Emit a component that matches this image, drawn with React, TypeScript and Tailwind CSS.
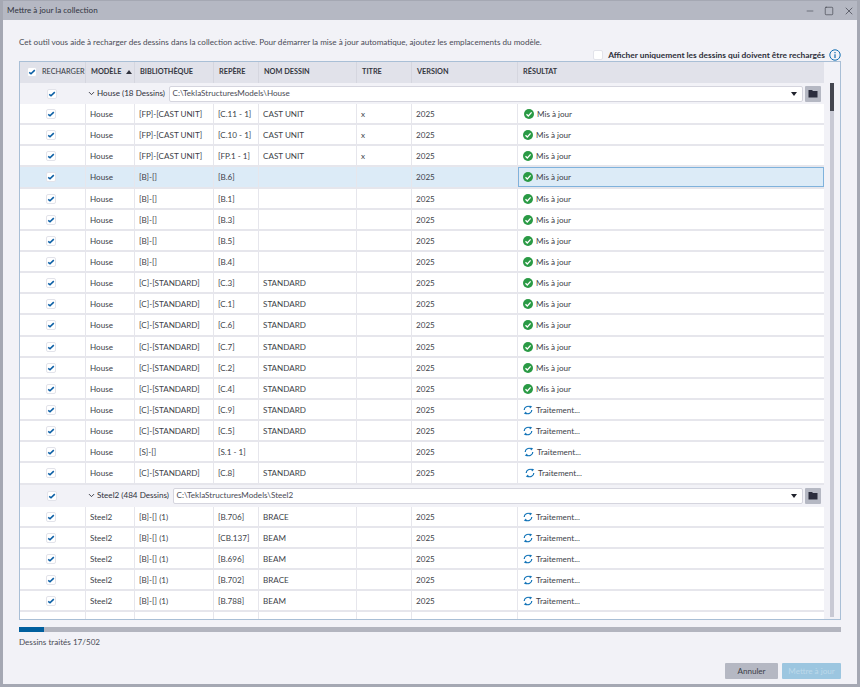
import { Minus, Square, X, ChevronDown } from 'lucide-react';

type Row = { model: string; lib: string; mark: string; name?: string; title?: string; done?: boolean; shift?: string; selected?: boolean };

const HOUSE: Row[] = [
  { model: 'House', lib: '[FP]-[CAST UNIT]', mark: '[C.11 - 1]', name: 'CAST UNIT', title: 'x', done: true, shift: 'ml-[1px]' },
  { model: 'House', lib: '[FP]-[CAST UNIT]', mark: '[C.10 - 1]', name: 'CAST UNIT', title: 'x', done: true },
  { model: 'House', lib: '[FP]-[CAST UNIT]', mark: '[FP.1 - 1]', name: 'CAST UNIT', title: 'x', done: true },
  { model: 'House', lib: '[B]-[]', mark: '[B.6]', done: true, selected: true },
  { model: 'House', lib: '[B]-[]', mark: '[B.1]', done: true },
  { model: 'House', lib: '[B]-[]', mark: '[B.3]', done: true },
  { model: 'House', lib: '[B]-[]', mark: '[B.5]', done: true },
  { model: 'House', lib: '[B]-[]', mark: '[B.4]', done: true },
  { model: 'House', lib: '[C]-[STANDARD]', mark: '[C.3]', name: 'STANDARD', done: true },
  { model: 'House', lib: '[C]-[STANDARD]', mark: '[C.1]', name: 'STANDARD', done: true },
  { model: 'House', lib: '[C]-[STANDARD]', mark: '[C.6]', name: 'STANDARD', done: true },
  { model: 'House', lib: '[C]-[STANDARD]', mark: '[C.7]', name: 'STANDARD', done: true },
  { model: 'House', lib: '[C]-[STANDARD]', mark: '[C.2]', name: 'STANDARD', done: true },
  { model: 'House', lib: '[C]-[STANDARD]', mark: '[C.4]', name: 'STANDARD', done: true },
  { model: 'House', lib: '[C]-[STANDARD]', mark: '[C.9]', name: 'STANDARD' },
  { model: 'House', lib: '[C]-[STANDARD]', mark: '[C.5]', name: 'STANDARD' },
  { model: 'House', lib: '[S]-[]', mark: '[S.1 - 1]', shift: 'ml-[1px]' },
  { model: 'House', lib: '[C]-[STANDARD]', mark: '[C.8]', name: 'STANDARD', shift: 'ml-[2px]' },
];

const STEEL: Row[] = [
  { model: 'Steel2', lib: '[B]-[] (1)', mark: '[B.706]', name: 'BRACE' },
  { model: 'Steel2', lib: '[B]-[] (1)', mark: '[CB.137]', name: 'BEAM' },
  { model: 'Steel2', lib: '[B]-[] (1)', mark: '[B.696]', name: 'BEAM' },
  { model: 'Steel2', lib: '[B]-[] (1)', mark: '[B.702]', name: 'BRACE' },
  { model: 'Steel2', lib: '[B]-[] (1)', mark: '[B.788]', name: 'BEAM' },
];

function Checkbox() {
  return (
    <span className="flex h-[10px] w-[10px] items-center justify-center rounded-[2px] border border-[#e2e3ea] bg-white">
      <svg width="8" height="8" viewBox="0 0 8 8">
        <path d="M1.2 4.4 L3 5.8 L6.8 2.2" fill="none" stroke="#0b5fa5" strokeWidth="1.6" />
      </svg>
    </span>
  );
}

function DoneIcon() {
  return (
    <svg width="10" height="10" viewBox="0 0 10 10" className="shrink-0">
      <circle cx="5" cy="5" r="5" fill="#2a9a45" />
      <path d="M2.5 5.2 L4.3 7 L7.6 3.4" fill="none" stroke="white" strokeWidth="1.3" />
    </svg>
  );
}

function BusyIcon() {
  return (
    <svg width="10" height="10" viewBox="0 0 10 10" className="shrink-0">
      <path d="M1.2 5 A3.8 3.8 0 0 1 7.2 2" fill="none" stroke="#1374b8" strokeWidth="1.2" />
      <path d="M8.8 5 A3.8 3.8 0 0 1 2.8 8" fill="none" stroke="#1374b8" strokeWidth="1.2" />
      <path d="M6.6 0.6 L9.2 1.6 L7 3.6 Z" fill="#1374b8" />
      <path d="M3.4 9.4 L0.8 8.4 L3 6.4 Z" fill="#1374b8" />
    </svg>
  );
}

function DataRow({ row }: { row: Row }) {
  const bg = row.selected ? 'bg-[#dcebf7]' : 'bg-white';
  const cell = 'flex h-full items-center border-r border-[#e6e6ec] pl-[4px] pt-[1px] truncate';
  return (
    <div className={`flex h-[21.15px] shrink-0 border-b-2 border-[#e6e6ec] text-[#3d3f49] ${bg}`}>
      <div className="flex h-full w-[66px] items-center justify-center border-r border-[#e6e6ec] pr-[3px] pt-[1px]">
        <Checkbox />
      </div>
      <div className={`${cell} w-[49px]`}>{row.model}</div>
      <div className={`${cell} w-[79px]`}>{row.lib}</div>
      <div className={`${cell} w-[45px]`}>{row.mark}</div>
      <div className={`${cell} w-[98px]`}>{row.name}</div>
      <div className={`${cell} w-[55px]`}>{row.title}</div>
      <div className={`${cell} w-[106px]`}>2025</div>
      <div className={`flex h-full w-[306px] items-center gap-[3px] pt-[1px] ${row.selected ? 'border border-[#7fb2dc] pl-[4px]' : 'pl-[5px]'}`}>
        <span className={`flex items-center gap-[3px] ${row.shift ?? ''}`}>
          {row.done ? <DoneIcon /> : <BusyIcon />}
          {row.done ? 'Mis à jour' : 'Traitement...'}
        </span>
      </div>
    </div>
  );
}

function GroupRow({ label, path, height }: { label: string; path: string; height: string }) {
  return (
    <div className={`flex shrink-0 items-center bg-[#f2f2f7] ${height}`}>
      <div className="flex w-[66px] shrink-0 justify-center pr-[3px]">
        <Checkbox />
      </div>
      <ChevronDown size={9} strokeWidth={2.4} className="ml-[1px] shrink-0 text-[#30323c]" />
      <span className="ml-[1px] shrink-0 text-[#2f313b]">{label}</span>
      <div className="ml-[4.5px] flex h-[16px] flex-1 items-center justify-between rounded-[2px] border border-[#d5d5de] bg-white px-[2px] text-[#4a4c56]">
        <span>{path}</span>
        <span className="mr-[3px] h-0 w-0 border-x-[3.5px] border-t-[4px] border-x-transparent border-t-[#20222c]" />
      </div>
      <div className="ml-[2px] mr-[3px] flex h-[16px] w-[16px] shrink-0 items-center justify-center rounded-[1px] bg-[#b5b8c3]">
        <svg width="10" height="9" viewBox="0 0 10 9">
          <path d="M0.5 1 H4 L5 2 H9.5 V8.5 H0.5 Z" fill="#2a2c3c" />
        </svg>
      </div>
    </div>
  );
}

function HeaderCell({ label, width, children }: { label: string; width: string; children?: React.ReactNode }) {
  return (
    <div className={`flex h-full items-center gap-[4px] border-r border-[#d5d6df] pb-[1px] pl-[5px] font-bold ${width}`}>
      {label}
      {children}
    </div>
  );
}

export default function App() {
  return (
    <div className="flex h-[687px] w-[860px] flex-col overflow-hidden border-x-[3px] border-b-[3px] border-t border-[#a5a8b3] bg-[#f2f2f7] text-[8.1px] font-['Lato',sans-serif]">
      <div className="flex h-[19px] shrink-0 items-center justify-between bg-[#b5b8c3] pl-[4px] pr-[2px] text-[#33353f]">
        <span>Mettre à jour la collection</span>
        <div className="flex items-center gap-[9px] text-[#33353f]">
          <Minus size={10} strokeWidth={1.3} />
          <Square size={10} strokeWidth={1.4} />
          <X size={12} strokeWidth={1.3} />
        </div>
      </div>

      <div className="flex flex-1 flex-col px-[16px]">
        <p className="mt-[16px] h-[12px] leading-[12px] text-[#4a4c56]">
          Cet outil vous aide à recharger des dessins dans la collection active. Pour démarrer la mise à jour automatique, ajoutez les emplacements du modèle.
        </p>
        <div className="mt-[1px] flex h-[12px] items-center justify-end">
          <span className="h-[10px] w-[10px] rounded-[2px] border border-[#e2e3ea] bg-white" />
          <span className="ml-[5px] text-[8.4px] font-bold text-[#2d2f39]">Afficher uniquement les dessins qui doivent être rechargés</span>
          <svg width="12" height="12" viewBox="0 0 12 12" className="ml-[4px]">
            <circle cx="6" cy="6" r="5.2" fill="none" stroke="#0f6cb0" strokeWidth="1" />
            <path d="M6 5.2 V9 M6 3 V4.2" stroke="#0f6cb0" strokeWidth="1.2" />
          </svg>
        </div>

        <div className="flex h-[559px] shrink-0 overflow-hidden border border-[#a9bfd6]">
          <div className="flex w-[804px] shrink-0 flex-col overflow-hidden">
            <div className="flex h-[21px] shrink-0 items-center bg-[#e1e2ea] text-[7.3px] text-[#34363f]">
              <div className="flex h-full w-[66px] items-center gap-[5px] border-r border-[#d5d6df] pb-[1px] pl-[7px]">
                <Checkbox />
                RECHARGER
              </div>
              <HeaderCell label="MODÈLE" width="w-[49px]">
                <span className="h-0 w-0 border-x-[3px] border-b-[4px] border-x-transparent border-b-[#30323c]" />
              </HeaderCell>
              <HeaderCell label="BIBLIOTHÈQUE" width="w-[79px]" />
              <HeaderCell label="REPÈRE" width="w-[45px]" />
              <HeaderCell label="NOM DESSIN" width="w-[98px]" />
              <HeaderCell label="TITRE" width="w-[55px]" />
              <HeaderCell label="VERSION" width="w-[106px]" />
              <HeaderCell label="RÉSULTAT" width="w-[306px] border-r-0" />
            </div>
            <GroupRow label="House (18 Dessins)" path="C:\TeklaStructuresModels\House" height="h-[21px]" />
            {HOUSE.map((r, i) => (
              <DataRow key={i} row={r} />
            ))}
            <GroupRow label="Steel2 (484 Dessins)" path="C:\TeklaStructuresModels\Steel2" height="h-[22px]" />
            {STEEL.map((r, i) => (
              <DataRow key={i} row={r} />
            ))}
            <div className="flex min-h-0 flex-1 bg-white">
              <div className="w-[66px] border-r border-[#e6e6ec]" />
              <div className="w-[49px] border-r border-[#e6e6ec]" />
              <div className="w-[79px] border-r border-[#e6e6ec]" />
              <div className="w-[45px] border-r border-[#e6e6ec]" />
              <div className="w-[98px] border-r border-[#e6e6ec]" />
              <div className="w-[55px] border-r border-[#e6e6ec]" />
              <div className="w-[106px] border-r border-[#e6e6ec]" />
            </div>
          </div>
          <div className="flex flex-1 justify-center pt-[21px] pb-[2px]">
            <div className="w-[4px] bg-[#c8c9d4]">
              <div className="h-[28px] w-full bg-[#44464f]" />
            </div>
          </div>
        </div>

        <div className="mt-[7px] h-[5px] shrink-0 bg-[#b3b5bf]">
          <div className="h-full w-[25px] bg-[#005f9e]" />
        </div>
        <div className="mt-[4px] text-[#4a4c56]">Dessins traités 17/502</div>

        <div className="mt-auto mb-[5px] flex justify-end gap-[4px]">
          <div className="flex h-[16px] w-[53px] items-center justify-center rounded-[1px] bg-[#b5b8c3] text-[#3d3f49]">Annuler</div>
          <div className="flex h-[16px] w-[59px] items-center justify-center rounded-[1px] bg-[#9cc6e0] text-[#bcd9ea]">Mettre à jour</div>
        </div>
      </div>
    </div>
  );
}
